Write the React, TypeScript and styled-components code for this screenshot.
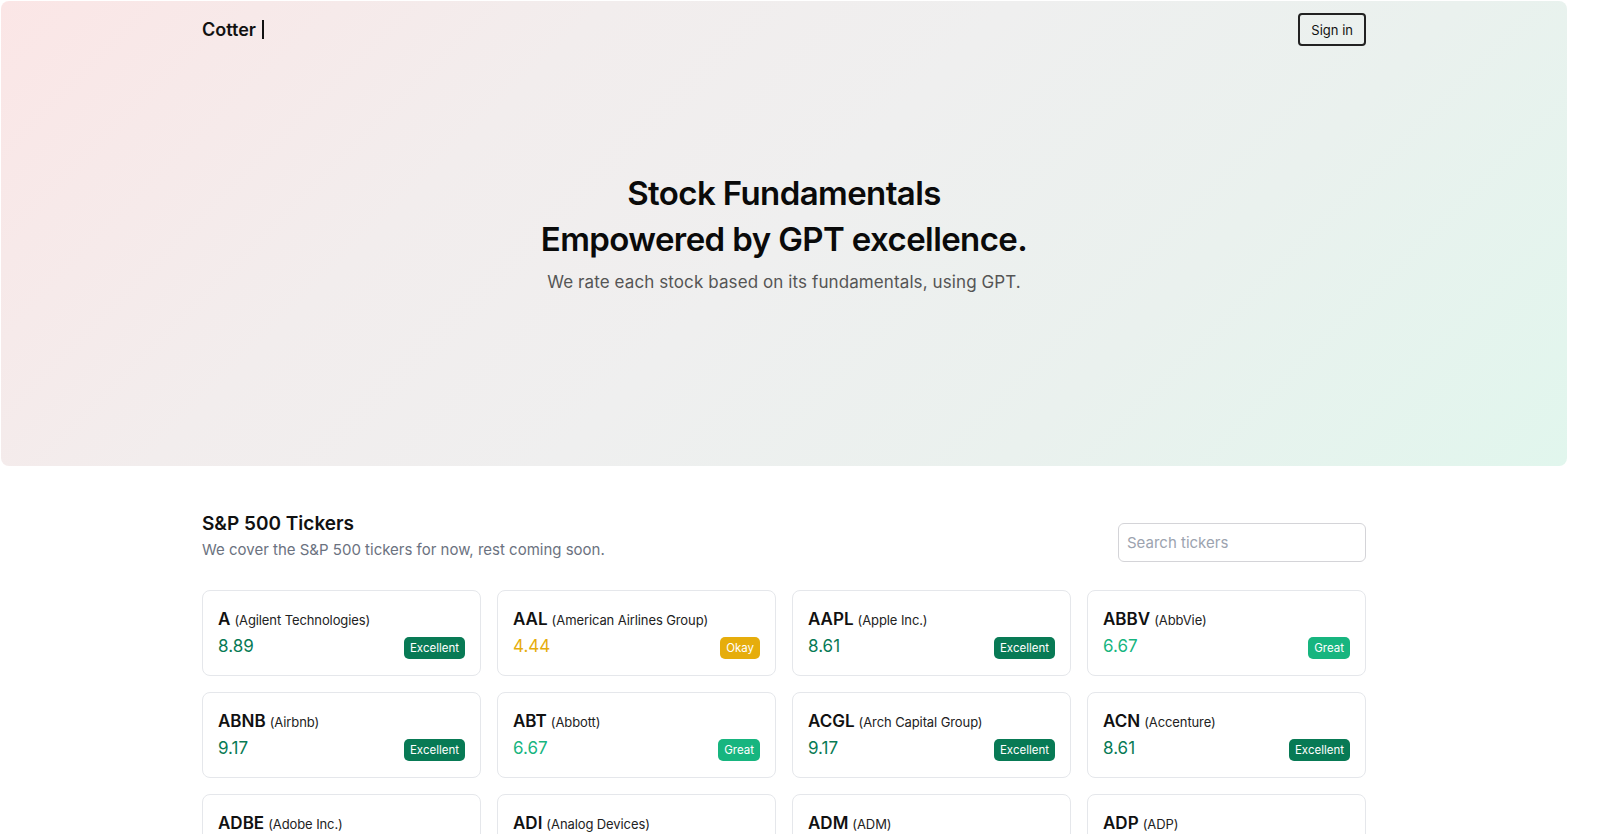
import styled, {createGlobalStyle} from "styled-components";

type Rating = "Excellent" | "Great" | "Okay";

type Ticker = {
   symbol: string;
   name: string;
   score: string;
   rating: Rating;
};

const RATING_COLORS: Record<Rating, string> = {
   Excellent: "#087a55",
   Great: "#17b57f",
   Okay: "#e6ad0c",
};

const TICKERS: Ticker[] = [
   {symbol: "A", name: "Agilent Technologies", score: "8.89", rating: "Excellent"},
   {symbol: "AAL", name: "American Airlines Group", score: "4.44", rating: "Okay"},
   {symbol: "AAPL", name: "Apple Inc.", score: "8.61", rating: "Excellent"},
   {symbol: "ABBV", name: "AbbVie", score: "6.67", rating: "Great"},
   {symbol: "ABNB", name: "Airbnb", score: "9.17", rating: "Excellent"},
   {symbol: "ABT", name: "Abbott", score: "6.67", rating: "Great"},
   {symbol: "ACGL", name: "Arch Capital Group", score: "9.17", rating: "Excellent"},
   {symbol: "ACN", name: "Accenture", score: "8.61", rating: "Excellent"},
   {symbol: "ADBE", name: "Adobe Inc.", score: "8.89", rating: "Excellent"},
   {symbol: "ADI", name: "Analog Devices", score: "8.33", rating: "Excellent"},
   {symbol: "ADM", name: "ADM", score: "6.67", rating: "Great"},
   {symbol: "ADP", name: "ADP", score: "8.61", rating: "Excellent"},
];

const GlobalStyle = createGlobalStyle`
  body {
    margin: 0;
    background: #fff;
    font-family: Inter, "Noto Sans", sans-serif;
    color: #111;
  }
`;

const Page = styled.div`
  width: 1568px;
`;

const Hero = styled.header`
  margin: 1px;
  height: 465px;
  border-radius: 8px;
  background: linear-gradient(135deg, #fbe6e6 0%, #f2eded 30%, #efefef 50%, #eaf1ee 72%, #e1f6ed 100%);
  display: flex;
  flex-direction: column;
`;

const Nav = styled.nav`
  width: 1164px;
  margin: 0 auto;
  padding-top: 12px;
  display: flex;
  align-items: center;
  justify-content: space-between;
`;

const Logo = styled.div`
  font-size: 18px;
  font-weight: 600;
  display: flex;
  align-items: center;
  gap: 6px;
`;

const Caret = styled.span`
  width: 2px;
  height: 19px;
  background: #111;
`;

const SignIn = styled.button`
  font-family: inherit;
  font-size: 13px;
  color: #111;
  background: transparent;
  border: 2px solid #222;
  border-radius: 4px;
  height: 33px;
  padding: 0 11px;
  cursor: pointer;
`;

const HeroBody = styled.div`
  margin-top: 124px;
  text-align: center;
`;

const Headline = styled.h1`
  margin: 0;
  font-size: 33px;
  line-height: 46px;
  font-weight: 600;
  letter-spacing: -0.6px;
  color: #0a0a0a;
`;

const Tagline = styled.p`
  margin: 10px 0 0;
  font-size: 17px;
  letter-spacing: 0.1px;
  color: #555;
`;

const Section = styled.section`
  width: 1164px;
  margin: 44px auto 0;
`;

const SectionHead = styled.div`
  display: flex;
  align-items: flex-end;
  justify-content: space-between;
  margin-bottom: 28px;
`;

const SectionTitle = styled.h2`
  margin: 0;
  font-size: 19px;
  line-height: 28px;
  font-weight: 600;
`;

const SectionSub = styled.p`
  margin: 0;
  font-size: 15px;
  line-height: 24px;
  color: #6b7280;
`;

const Search = styled.input`
  width: 248px;
  height: 39px;
  box-sizing: border-box;
  border: 1px solid #d4d4d8;
  border-radius: 6px;
  padding: 0 8px;
  font-family: inherit;
  font-size: 15px;
  background: #fff;

  &::placeholder {
    color: #9ca3af;
  }
`;

const Grid = styled.div`
  display: grid;
  grid-template-columns: repeat(4, 1fr);
  gap: 16px;
`;

const Card = styled.div`
  height: 86px;
  box-sizing: border-box;
  border: 1px solid #e5e7eb;
  border-radius: 8px;
  padding: 15px 15px 0;
`;

const TitleRow = styled.div`
  display: flex;
  align-items: baseline;
  gap: 4px;
  line-height: 26px;
`;

const Symbol = styled.span`
  font-size: 17px;
  font-weight: 600;
`;

const CompanyName = styled.span`
  font-size: 13px;
  letter-spacing: -0.1px;
  color: #222;
`;

const ScoreRow = styled.div`
  display: flex;
  align-items: center;
  justify-content: space-between;
`;

const Score = styled.span<{ $color: string }>`
  font-size: 17px;
  color: ${p => p.$color};
`;

const Badge = styled.span<{ $color: string }>`
  background: ${p => p.$color};
  color: #fff;
  font-size: 11.5px;
  line-height: 22px;
  padding: 0 6px;
  border-radius: 5px;
  margin-top: 4px;
`;

const TickerCard = ({ticker}: { ticker: Ticker }) => {
   const color = RATING_COLORS[ticker.rating];
   return (
       <Card>
          <TitleRow>
             <Symbol>{ticker.symbol}</Symbol>
             <CompanyName>({ticker.name})</CompanyName>
          </TitleRow>
          <ScoreRow>
             <Score $color={color}>{ticker.score}</Score>
             <Badge $color={color}>{ticker.rating}</Badge>
          </ScoreRow>
       </Card>
   );
};

const App = () => (
    <Page>
       <GlobalStyle/>
       <Hero>
          <Nav>
             <Logo>Cotter <Caret/></Logo>
             <SignIn>Sign in</SignIn>
          </Nav>
          <HeroBody>
             <Headline>Stock Fundamentals<br/>Empowered by GPT excellence.</Headline>
             <Tagline>We rate each stock based on its fundamentals, using GPT.</Tagline>
          </HeroBody>
       </Hero>
       <Section>
          <SectionHead>
             <div>
                <SectionTitle>S&amp;P 500 Tickers</SectionTitle>
                <SectionSub>We cover the S&amp;P 500 tickers for now, rest coming soon.</SectionSub>
             </div>
             <Search placeholder="Search tickers"/>
          </SectionHead>
          <Grid>
             {TICKERS.map(t => <TickerCard key={t.symbol} ticker={t}/>)}
          </Grid>
       </Section>
    </Page>
);

export default App;
